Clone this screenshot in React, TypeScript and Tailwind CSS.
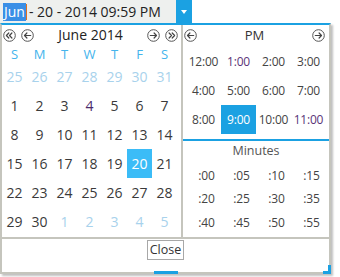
import React from "react";

const DAYS = ["S", "M", "T", "W", "T", "F", "S"];

interface DayCell {
  n: number;
  other?: boolean;
}

const WEEKS: DayCell[][] = [
  [25, 26, 27, 28, 29, 30, 31].map((n) => ({ n, other: true })),
  [1, 2, 3, 4, 5, 6, 7].map((n) => ({ n })),
  [8, 9, 10, 11, 12, 13, 14].map((n) => ({ n })),
  [15, 16, 17, 18, 19, 20, 21].map((n) => ({ n })),
  [22, 23, 24, 25, 26, 27, 28].map((n) => ({ n })),
  [...[29, 30].map((n) => ({ n })), ...[1, 2, 3, 4, 5].map((n) => ({ n, other: true }))],
];

const HOURS = ["12:00", "1:00", "2:00", "3:00", "4:00", "5:00", "6:00", "7:00", "8:00", "9:00", "10:00", "11:00"];
const MINUTES = [":00", ":05", ":10", ":15", ":20", ":25", ":30", ":35", ":40", ":45", ":50", ":55"];

function NavButton({ dir, double }: { dir: "left" | "right"; double?: boolean }) {
  const flip = dir === "right" ? "scale(-1,1) translate(-13,0)" : undefined;
  return (
    <svg width="13" height="13" viewBox="0 0 13 13" className="shrink-0">
      <circle cx="6.5" cy="6.5" r="5.8" fill="white" stroke="#555" strokeWidth="1" />
      <g transform={flip} stroke="#444" strokeWidth="1.2" fill="none" strokeLinecap="round" strokeLinejoin="round">
        {double ? (
          <>
            <path d="M5.8 4 L3.4 6.5 L5.8 9" />
            <path d="M8.9 4 L6.5 6.5 L8.9 9" />
          </>
        ) : (
          <>
            <path d="M5.9 4 L3.5 6.5 L5.9 9" />
            <path d="M3.7 6.5 H9.7" />
          </>
        )}
      </g>
    </svg>
  );
}

export default function App() {
  return (
    <div className="relative w-[340px] h-[277px] bg-white overflow-hidden font-['Segoe_UI','Open_Sans',sans-serif]">
      {/* input */}
      <div className="flex h-[23px] w-[192px]">
        <div className="flex-1 bg-[#eef0ee] flex items-center pl-[3px] text-[14px] text-[#222] leading-none">
          <span className="bg-[#3a8fe6] text-white px-[1px] py-[2px]">Jun</span>
          <span className="w-[1px] h-[16px] bg-[#e07020]" />
          <span className="ml-[2px]">- 20 - 2014 09:59 PM</span>
        </div>
        <div className="w-[16px] bg-[#1ba1e2] flex items-center justify-center">
          <svg width="6" height="4" viewBox="0 0 6 4">
            <path d="M0 0 H6 L3 4 Z" fill="white" />
          </svg>
        </div>
      </div>

      {/* popup */}
      <div className="relative w-[331px] border-t-2 border-t-[#1ba1e2] border-x-2 border-x-[#c5c5bd] border-b-2 border-b-[#c5c5bd] shadow-[2px_2px_2px_rgba(0,0,0,0.25)]">
        <div className="flex h-[212px]">
          {/* calendar */}
          <div className="w-[179px] flex flex-col">
            <div className="flex items-center h-[20px] pl-[1px] pr-[3px] gap-[5px]">
              <NavButton dir="left" double />
              <NavButton dir="left" />
              <div className="flex-1 text-center text-[14px] text-[#222] leading-none">June 2014</div>
              <NavButton dir="right" />
              <NavButton dir="right" double />
            </div>
            <div className="grid grid-cols-7 w-[175px] h-[17px] items-center text-[13px] text-[#44b4ec]">
              {DAYS.map((d, i) => (
                <div key={i} className="text-center">{d}</div>
              ))}
            </div>
            <div className="flex flex-col w-[175px]">
              {WEEKS.map((w, wi) => (
                <div key={wi} className="grid grid-cols-7 h-[29px]">
                  {w.map((c, ci) => {
                    const sel = !c.other && c.n === 20;
                    const purple = !c.other && c.n === 4;
                    return (
                      <div
                        key={ci}
                        className={
                          "flex items-center justify-center text-[14px] " +
                          (sel
                            ? "bg-[#3bbcf7] text-white"
                            : c.other
                            ? "text-[#a8d2ec]"
                            : purple
                            ? "text-[#4a2a6a]"
                            : "text-[#3a3a3a]")
                        }
                      >
                        {c.n}
                      </div>
                    );
                  })}
                </div>
              ))}
            </div>
          </div>

          <div className="w-[2px] bg-[#c5c5bd]" />

          {/* time */}
          <div className="flex-1 flex flex-col">
            <div className="flex items-center h-[20px] pl-[1px] pr-[4px]">
              <NavButton dir="left" />
              <div className="flex-1 text-center text-[13px] text-[#333] leading-none">PM</div>
              <NavButton dir="right" />
            </div>
            <div className="grid grid-cols-4 w-[140px] ml-[3px] mt-[2px]">
              {HOURS.map((h) => {
                const sel = h === "9:00";
                const purple = h === "1:00" || h === "11:00";
                return (
                  <div
                    key={h}
                    className={
                      "h-[29px] flex items-center justify-center text-[12px] tracking-[-0.2px] " +
                      (sel ? "bg-[#1ba1e2] text-white" : purple ? "text-[#5a3478]" : "text-[#444]")
                    }
                  >
                    {h}
                  </div>
                );
              })}
            </div>
            <div className="h-[2px] bg-[#1ba1e2] mt-[5px]" />
            <div className="h-[21px] flex items-center justify-center text-[12.5px] text-[#555]">Minutes</div>
            <div className="grid grid-cols-4 w-[140px] ml-[6px] mt-[2px]">
              {MINUTES.map((m) => (
                <div key={m} className="h-[23.5px] flex items-center justify-center text-[12px] tracking-[-0.2px] text-[#444]">
                  {m}
                </div>
              ))}
            </div>
          </div>
        </div>

        <div className="h-[2px] bg-[#c5c5bd]" />

        {/* footer */}
        <div className="h-[33px] flex justify-center pt-[1px]">
          <button className="h-[20px] px-[2px] border border-[#a8a8a8] bg-white text-[12.5px] text-[#333] leading-none">
            Close
          </button>
        </div>

        <div className="absolute left-[152px] -bottom-[2px] w-[24px] h-[3px] bg-[#1ba1e2]" />
        <div className="absolute right-[-2px] -bottom-[2px] w-[3px] h-[9px] bg-[#1ba1e2]" />
        <div className="absolute right-[-2px] -bottom-[2px] w-[8px] h-[3px] bg-[#1ba1e2]" />
      </div>
    </div>
  );
}
